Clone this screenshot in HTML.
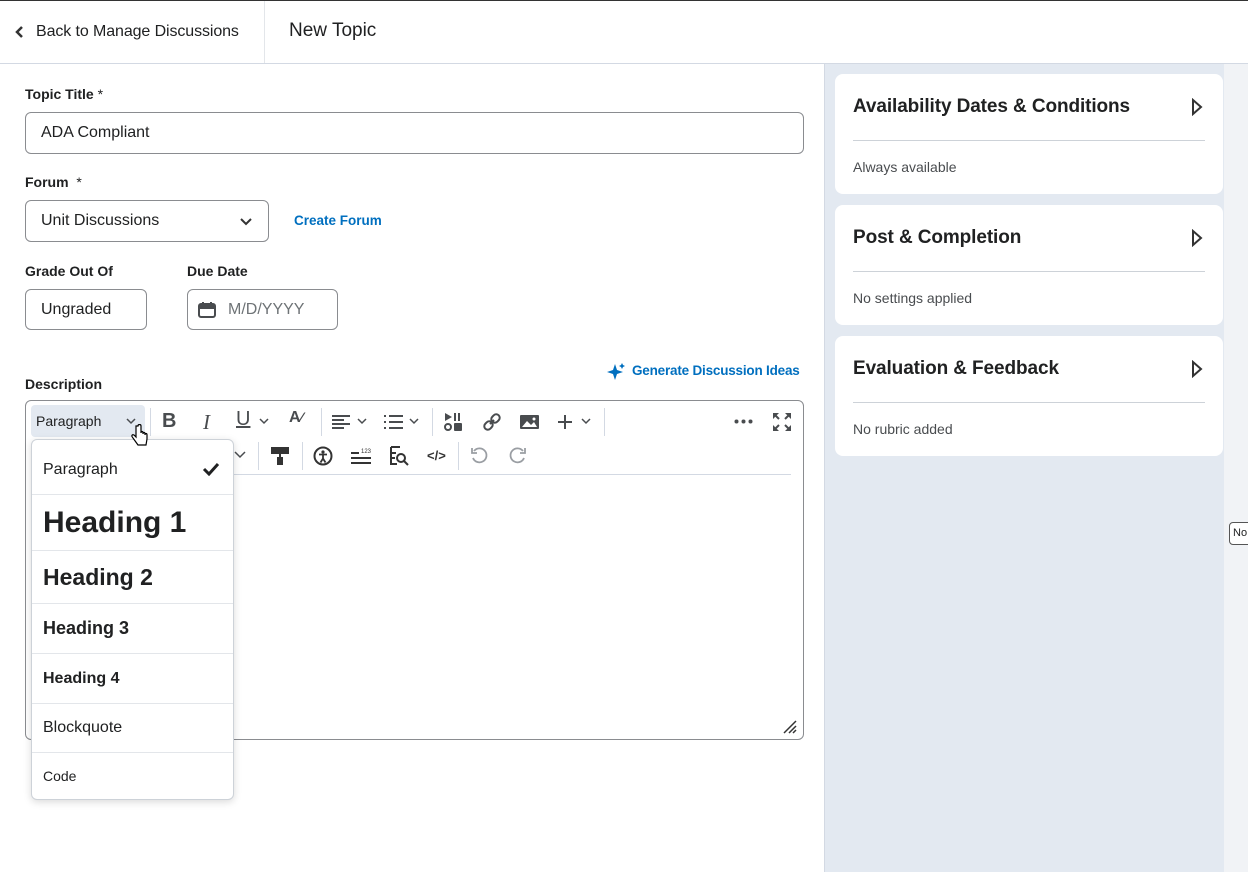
<!DOCTYPE html>
<html><head><meta charset="utf-8"><style>
*{box-sizing:border-box;margin:0;padding:0}
body{width:1248px;height:872px;overflow:hidden;background:#fff;font-family:"Liberation Sans",sans-serif;color:#202122;position:relative}
.abs{position:absolute}
.hdr{left:0;top:0;width:1248px;height:64px;border-top:1px solid #333;border-bottom:1px solid #d3d9e3}
.lbl{font-size:14px;font-weight:bold;color:#202122}
.inp{border:1px solid #8a8c90;border-radius:6px;background:#fff;font-size:16px;color:#202122}
.card{left:835px;width:388px;background:#fff;border-radius:8px}
.card h3{position:absolute;left:18px;top:22px;font-size:19px;font-weight:bold;color:#202122;letter-spacing:-0.1px}
.card .ln{position:absolute;left:18px;right:18px;top:66px;border-top:1px solid #cdd2d8}
.card p{position:absolute;left:18px;top:85px;font-size:14px;color:#494c4f}
.card svg{position:absolute;right:20px;top:24px}
.tb{color:#494c4f;font-size:18px}
.sep{width:1px;height:28px;background:#d3d9e3}
.dd{left:31px;top:439px;width:203px;height:361px;background:#fff;border:1px solid #cdd2d8;border-radius:6px;box-shadow:0 2px 8px rgba(0,0,0,.15)}
.it{position:absolute;left:0;width:201px;border-bottom:1px solid #e3e6ea;padding-left:11px;display:flex;align-items:center;color:#202122}
</style></head><body>
<div class="abs hdr"></div>
<div class="abs" style="left:264px;top:1px;width:1px;height:62px;background:#e3e6ea"></div>
<svg class="abs" style="left:14px;top:25px" width="10" height="14"><path d="M8 2 L3 7 L8 12" stroke="#333" stroke-width="2.5" fill="none"/></svg>
<div class="abs" style="left:36px;top:23px;font-size:16px;color:#202122;letter-spacing:-0.1px">Back to Manage Discussions</div>
<div class="abs" style="left:289px;top:20px;font-size:19px;color:#202122">New Topic</div>

<div class="abs" style="left:824px;top:64px;width:424px;height:808px;background:#e3e9f1"></div>
<div class="abs" style="left:824px;top:64px;width:1px;height:808px;background:#d3d9e3"></div>
<div class="abs" style="left:1224px;top:64px;width:24px;height:808px;background:#f1f3f6"></div>
<div class="abs" style="left:1229px;top:522px;width:30px;height:23px;border:1px solid #555;border-radius:4px;background:#fff;font-size:11px;padding:4px 3px">No</div>

<div class="abs card" style="top:74px;height:120px"><h3>Availability Dates &amp; Conditions</h3><svg width="12" height="18"><path d="M2 2 L10 9 L2 16 Z" stroke="#333" stroke-width="2" fill="none"/></svg><div class="ln"></div><p>Always available</p></div>
<div class="abs card" style="top:205px;height:120px"><h3>Post &amp; Completion</h3><svg width="12" height="18"><path d="M2 2 L10 9 L2 16 Z" stroke="#333" stroke-width="2" fill="none"/></svg><div class="ln"></div><p>No settings applied</p></div>
<div class="abs card" style="top:336px;height:120px"><h3>Evaluation &amp; Feedback</h3><svg width="12" height="18"><path d="M2 2 L10 9 L2 16 Z" stroke="#333" stroke-width="2" fill="none"/></svg><div class="ln"></div><p>No rubric added</p></div>

<div class="abs lbl" style="left:25px;top:86px">Topic Title <span style="font-weight:normal">*</span></div>
<div class="abs inp" style="left:25px;top:112px;width:779px;height:42px;padding:11px 15px">ADA Compliant</div>
<div class="abs lbl" style="left:25px;top:174px">Forum &nbsp;<span style="font-weight:normal">*</span></div>
<div class="abs inp" style="left:25px;top:200px;width:244px;height:42px;padding:11px 15px">Unit Discussions</div>
<svg class="abs" style="left:239px;top:217px" width="14" height="10"><path d="M2 2 L7 7 L12 2" stroke="#333" stroke-width="2" fill="none"/></svg>
<div class="abs" style="left:294px;top:213px;font-size:13.5px;font-weight:bold;color:#006fbf">Create Forum</div>
<div class="abs lbl" style="left:25px;top:263px">Grade Out Of</div>
<div class="abs lbl" style="left:187px;top:263px">Due Date</div>
<div class="abs inp" style="left:25px;top:289px;width:122px;height:41px;padding:11px 15px">Ungraded</div>
<div class="abs inp" style="left:187px;top:289px;width:151px;height:41px;padding:11px 0 0 40px;color:#6e7376">M/D/YYYY</div>
<svg class="abs" style="left:198px;top:301px" width="18" height="17"><rect x="1" y="3" width="16" height="13" rx="2" fill="none" stroke="#494c4f" stroke-width="2"/><rect x="1" y="3" width="16" height="5" fill="#494c4f"/><path d="M5 1v4M13 1v4" stroke="#494c4f" stroke-width="2"/></svg>

<div class="abs lbl" style="left:25px;top:376px">Description</div>
<svg class="abs" style="left:606px;top:362px" width="20" height="20"><path d="M9 2 L11 8 L17 10 L11 12 L9 18 L7 12 L1 10 L7 8Z" fill="#006fbf"/><path d="M16 1 L17 3 L19 4 L17 5 L16 7 L15 5 L13 4 L15 3Z" fill="#006fbf"/></svg>
<div class="abs" style="left:632px;top:363px;font-size:13.5px;font-weight:bold;color:#006fbf;letter-spacing:-0.2px">Generate Discussion Ideas</div>

<div class="abs" style="left:25px;top:400px;width:779px;height:340px;border:1px solid #8a8c90;border-radius:6px"></div>
<div class="abs" style="left:36px;top:474px;width:755px;height:1px;background:#d3d9e3"></div>
<div class="abs" style="left:31px;top:405px;width:114px;height:32px;background:#e3e9f1;border-radius:4px"></div>
<div class="abs" style="left:36px;top:413px;font-size:14px;color:#202122">Paragraph</div>
<svg class="abs" style="left:126px;top:418px" width="10" height="7"><path d="M1 1 L5 5 L9 1" stroke="#494c4f" stroke-width="1.5" fill="none"/></svg>
<div class="abs sep" style="left:150px;top:408px"></div>
<div class="abs tb" style="left:162px;top:410px;font-weight:bold;font-size:20px">B</div>
<div class="abs tb" style="left:203px;top:410px;font-style:italic;font-family:'Liberation Serif';font-size:21px">I</div>
<div class="abs tb" style="left:236px;top:408px;text-decoration:underline;font-size:20px">U</div>
<svg class="abs" style="left:259px;top:418px" width="10" height="7"><path d="M1 1 L5 5 L9 1" stroke="#494c4f" stroke-width="1.5" fill="none"/></svg>
<div class="abs tb" style="left:289px;top:409px;font-size:16px;font-weight:bold">A<span style="font-size:14px">⁄</span></div>
<div class="abs sep" style="left:321px;top:408px"></div>
<svg class="abs" style="left:332px;top:414px" width="36" height="16"><path d="M0 2h18M0 6h12M0 10h18M0 14h12" stroke="#494c4f" stroke-width="2"/><path d="M26 5 L30 9 L34 5" stroke="#494c4f" stroke-width="1.5" fill="none"/></svg>
<svg class="abs" style="left:384px;top:414px" width="38" height="16"><path d="M0 2h2M0 8h2M0 14h2M5 2h14M5 8h14M5 14h14" stroke="#494c4f" stroke-width="2"/><path d="M26 5 L30 9 L34 5" stroke="#494c4f" stroke-width="1.5" fill="none"/></svg>
<div class="abs sep" style="left:432px;top:408px"></div>
<svg class="abs" style="left:444px;top:412px" width="20" height="20"><path d="M1 1 L8 5 L1 9Z" fill="#494c4f"/><path d="M11 1v8M15 1v8" stroke="#494c4f" stroke-width="2"/><circle cx="4" cy="15" r="3" fill="none" stroke="#494c4f" stroke-width="2"/><rect x="10" y="11" width="8" height="8" rx="1" fill="#494c4f"/></svg>
<svg class="abs" style="left:482px;top:412px" width="20" height="20"><path d="M8 12 L12 8" stroke="#494c4f" stroke-width="2"/><rect x="10" y="2" width="7" height="9" rx="3.5" transform="rotate(45 13.5 6.5)" fill="none" stroke="#494c4f" stroke-width="2"/><rect x="3" y="9" width="7" height="9" rx="3.5" transform="rotate(45 6.5 13.5)" fill="none" stroke="#494c4f" stroke-width="2"/></svg>
<svg class="abs" style="left:520px;top:414px" width="20" height="16"><rect x="0" y="1" width="19" height="14" rx="1" fill="#494c4f"/><path d="M2 13 L7 7 L11 11 L14 8 L17 13Z" fill="#fff"/><circle cx="14" cy="5" r="1.5" fill="#fff"/></svg>
<svg class="abs" style="left:558px;top:414px" width="36" height="16"><path d="M7 1v14M0 8h14" stroke="#494c4f" stroke-width="2"/><path d="M24 5 L28 9 L32 5" stroke="#494c4f" stroke-width="1.5" fill="none"/></svg>
<div class="abs sep" style="left:604px;top:408px"></div>
<svg class="abs" style="left:734px;top:419px" width="20" height="5"><circle cx="2.5" cy="2.5" r="2" fill="#494c4f"/><circle cx="9.5" cy="2.5" r="2" fill="#494c4f"/><circle cx="16.5" cy="2.5" r="2" fill="#494c4f"/></svg>
<svg class="abs" style="left:772px;top:412px" width="20" height="20"><path d="M1 1h6L1 7Z M19 1h-6L19 7Z M1 19h6L1 13Z M19 19h-6L19 13Z" fill="#494c4f"/><path d="M3 3l4 4M17 3l-4 4M3 17l4-4M17 17l-4-4" stroke="#494c4f" stroke-width="2"/></svg>

<svg class="abs" style="left:234px;top:451px" width="12" height="8"><path d="M1 1 L6 6 L11 1" stroke="#494c4f" stroke-width="1.5" fill="none"/></svg>
<div class="abs sep" style="left:258px;top:442px"></div>
<svg class="abs" style="left:270px;top:446px" width="20" height="20"><rect x="1" y="1" width="18" height="7" fill="#333"/><path d="M10 8v4" stroke="#333" stroke-width="2"/><rect x="7" y="11" width="6" height="8" fill="#333"/></svg>
<div class="abs sep" style="left:302px;top:442px"></div>
<svg class="abs" style="left:313px;top:446px" width="20" height="20"><circle cx="10" cy="10" r="8.5" fill="none" stroke="#333" stroke-width="2"/><circle cx="10" cy="6" r="1.6" fill="#333"/><path d="M6 8.5h8M10 8.5v4l-2.5 4M10 12.5l2.5 4" stroke="#333" stroke-width="1.8" fill="none"/></svg>
<svg class="abs" style="left:350px;top:447px" width="22" height="18"><path d="M1 6h8M1 11h20M1 16h20" stroke="#333" stroke-width="2"/><text x="11" y="6" font-size="6" fill="#333" font-family="Liberation Sans">123</text></svg>
<svg class="abs" style="left:389px;top:446px" width="20" height="20"><path d="M2 1h9M2 1v17h6M2 7h5M2 12h4" stroke="#333" stroke-width="2" fill="none"/><circle cx="12" cy="12" r="4" fill="none" stroke="#333" stroke-width="2"/><path d="M15 15l4 4" stroke="#333" stroke-width="2"/></svg>
<div class="abs" style="left:427px;top:448px;font-size:13px;font-weight:bold;color:#333">&lt;/&gt;</div>
<div class="abs sep" style="left:458px;top:442px"></div>
<svg class="abs" style="left:470px;top:446px" width="20" height="20"><path d="M4 5 A7 7 0 1 1 3 12" stroke="#9a9ea3" stroke-width="1.8" fill="none"/><path d="M2 2v5h5" stroke="#9a9ea3" stroke-width="1.8" fill="none"/></svg>
<svg class="abs" style="left:507px;top:446px" width="20" height="20"><path d="M16 5 A7 7 0 1 0 17 12" stroke="#9a9ea3" stroke-width="1.8" fill="none"/><path d="M18 2v5h-5" stroke="#9a9ea3" stroke-width="1.8" fill="none"/></svg>
<svg class="abs" style="left:782px;top:719px" width="16" height="16"><path d="M2 14L14 2M7 14L14 7M11 14L14 11" stroke="#333" stroke-width="1.5"/></svg>

<div class="abs dd">
<div class="it" style="top:0;height:55px;font-size:16px;padding-top:5px">Paragraph</div>
<svg class="abs" style="left:170px;top:22px" width="18" height="14"><path d="M2 7 L7 12 L16 2" stroke="#202122" stroke-width="3" fill="none"/></svg>
<div class="it" style="top:55px;height:56px;font-size:30px;font-weight:bold">Heading 1</div>
<div class="it" style="top:111px;height:53px;font-size:23px;font-weight:bold">Heading 2</div>
<div class="it" style="top:164px;height:50px;font-size:18px;font-weight:bold">Heading 3</div>
<div class="it" style="top:214px;height:50px;font-size:16px;font-weight:bold">Heading 4</div>
<div class="it" style="top:264px;height:49px;font-size:16px">Blockquote</div>
<div class="it" style="top:313px;height:46px;font-size:14px;border-bottom:none">Code</div>
</div>
<svg class="abs" style="left:131px;top:424px" width="18" height="24"><path d="M5 2 v11 l-2 -2 c-2 -1 -3 1 -1 3 l5 7 h8 l1 -6 v-4 c0 -2 -2 -2 -2 0 v-1 c0 -2 -2 -2 -2 0 v-1 c0 -2 -2 -2 -2 0 V2 c0 -2 -3 -2 -3 0Z" fill="#fff" stroke="#000" stroke-width="1.2"/></svg>
</body></html>
